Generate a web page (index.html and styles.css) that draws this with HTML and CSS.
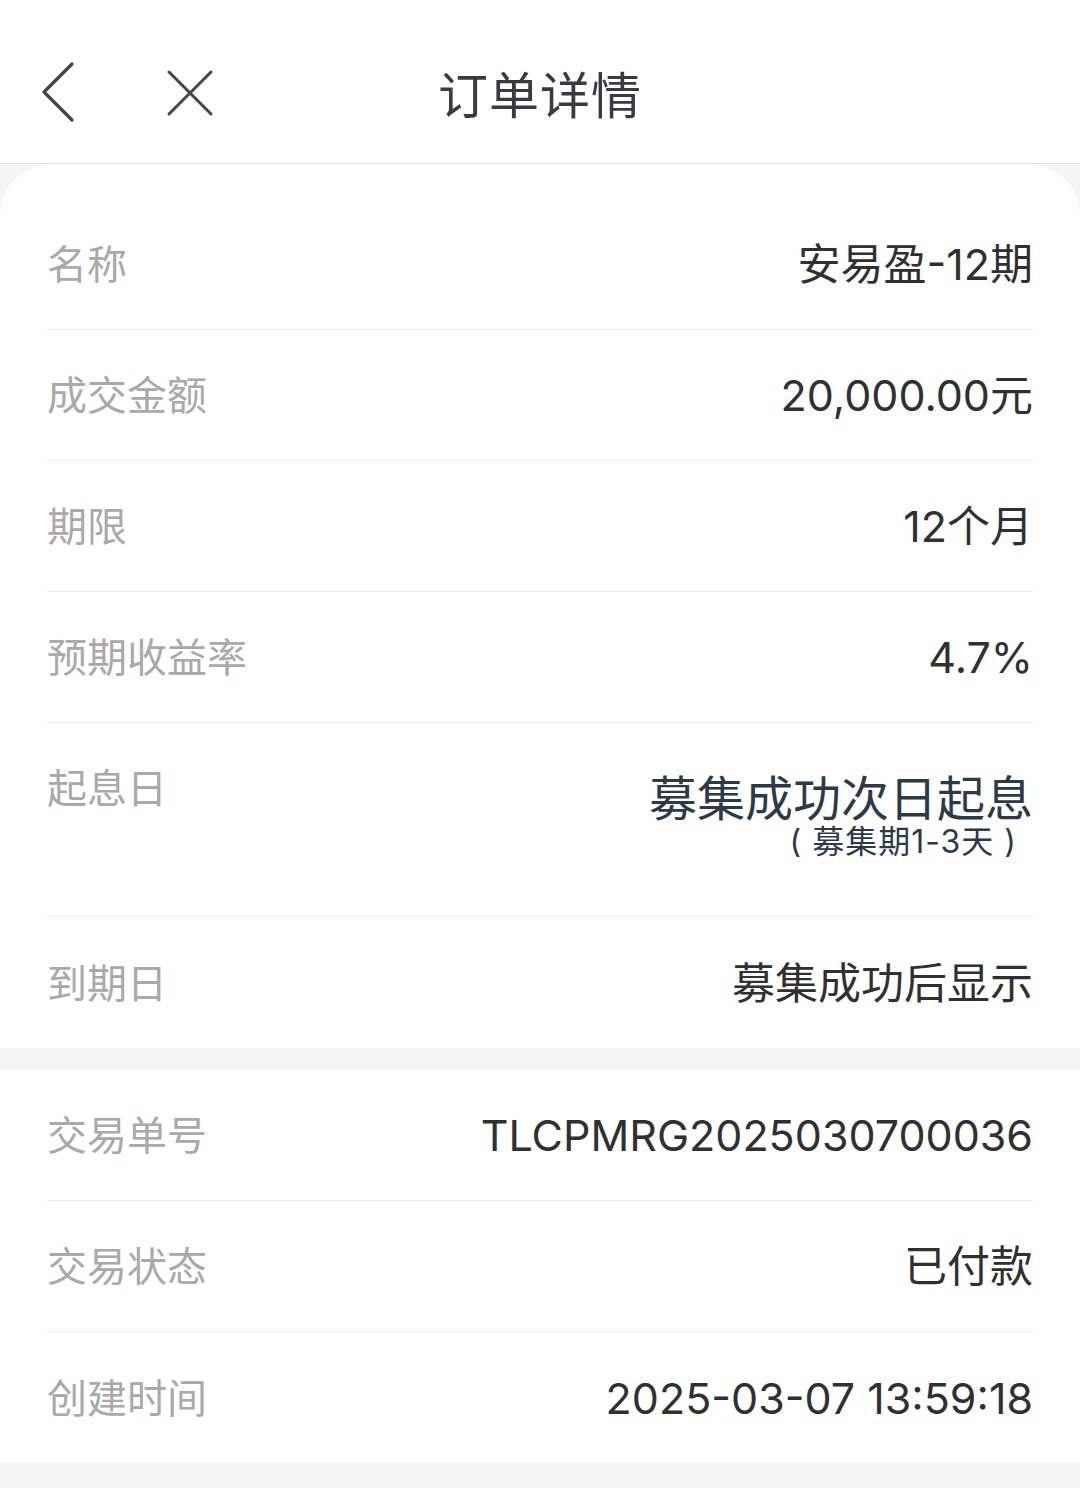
FILE: index.html
```html
<!DOCTYPE html>
<html lang="zh-CN">
<head>
    <meta charset="UTF-8">
    <meta name="viewport" content="width=device-width, initial-scale=1.0">
    <title>订单详情</title>
    <link rel="stylesheet" href="styles.css">
</head>
<body>
    <div class="header">
        <div class="nav-icons">
            <svg class="icon-back" width="40" height="64" viewBox="0 0 40 64">
                <polyline points="31,4 3,32 31,60" fill="none" stroke="#45454d" stroke-width="3.2" stroke-linecap="round" stroke-linejoin="round"/>
            </svg>
            <svg class="icon-close" width="48" height="48" viewBox="0 0 48 48">
                <path d="M3 3 L45 45 M45 3 L3 45" fill="none" stroke="#45454d" stroke-width="3" stroke-linecap="round"/>
            </svg>
        </div>
        <div class="title">订单详情</div>
    </div>

    <div class="page">
        <div class="card card-top">
            <div class="row">
                <span class="label">名称</span>
                <span class="value">安易盈-12期</span>
            </div>
            <div class="row">
                <span class="label">成交金额</span>
                <span class="value">20,000.00元</span>
            </div>
            <div class="row">
                <span class="label">期限</span>
                <span class="value">12个月</span>
            </div>
            <div class="row">
                <span class="label">预期收益率</span>
                <span class="value">4.7%</span>
            </div>
            <div class="row row-tall">
                <span class="label">起息日</span>
                <div class="value-block">
                    <div class="value-big">募集成功次日起息</div>
                    <div class="value-sub">( 募集期1-3天 )</div>
                </div>
            </div>
            <div class="row row-last">
                <span class="label">到期日</span>
                <span class="value">募集成功后显示</span>
            </div>
        </div>

        <div class="card card-bottom">
            <div class="row">
                <span class="label">交易单号</span>
                <span class="value">TLCPMRG2025030700036</span>
            </div>
            <div class="row">
                <span class="label">交易状态</span>
                <span class="value">已付款</span>
            </div>
            <div class="row row-last">
                <span class="label">创建时间</span>
                <span class="value">2025-03-07 13:59:18</span>
            </div>
        </div>
    </div>
</body>
</html>
```

FILE: styles.css
```css
body {
    margin: 0;
    font-family: "Noto Sans CJK SC", "Noto Sans", sans-serif;
    background-color: #f5f5f5;
    color: #333;
    height: 1488px;
    overflow: hidden;
}

.header {
    position: relative;
    height: 164px;
    padding-top: 20px;
    box-sizing: border-box;
    background-color: #fff;
    border-bottom: 1px solid #e2e2e2;
    display: flex;
    align-items: center;
    justify-content: center;
}

.nav-icons {
    position: absolute;
    left: 41px;
    top: 60px;
    display: flex;
    align-items: center;
    gap: 85px;
}

.icon-close {
    margin-top: 2px;
}

.title {
    font-size: 50px;
    color: #3a3a40;
    letter-spacing: 1px;
    line-height: 60px;
}

.card {
    background-color: #fff;
}

.card-top {
    border-radius: 52px 52px 0 0;
    padding-top: 35px;
}

.card-bottom {
    margin-top: 22px;
}

.row {
    margin: 0 47px;
    height: 130px;
    border-bottom: 1px solid #ececec;
    display: flex;
    justify-content: space-between;
    align-items: center;
}

.row-last {
    border-bottom: none;
    height: 131px;
}

.label {
    font-size: 40px;
    line-height: 56px;
    color: #a9a9a9;
    margin-bottom: 4px;
}

.value {
    font-family: "Inter", "Noto Sans CJK SC", sans-serif;
    font-size: 43px;
    line-height: 56px;
    color: #303030;
}

.row-tall {
    align-items: flex-start;
    padding-top: 35px;
    box-sizing: border-box;
    height: 194px;
}

.value-block {
    margin-top: 15px;
    text-align: right;
    font-family: "Inter", "Noto Sans CJK SC", sans-serif;
    color: #2c3949;
}

.value-big {
    font-size: 48px;
    line-height: 52px;
}

.value-sub {
    font-size: 32px;
    line-height: 34px;
    letter-spacing: 1px;
    padding-right: 16px;
}
```
